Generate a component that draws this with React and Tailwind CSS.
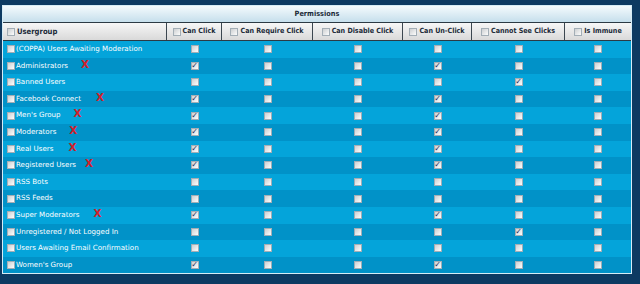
import React from "react";

const rows = [
  { name: "(COPPA) Users Awaiting Moderation", checks: [] },
  { name: "Administrators", x: 12, checks: [0, 3] },
  { name: "Banned Users", checks: [4] },
  { name: "Facebook Connect", x: 14, checks: [0, 3] },
  { name: "Men's Group", x: 12, checks: [0, 3] },
  { name: "Moderators", x: 12, checks: [0, 3] },
  { name: "Real Users", x: 14, checks: [0, 3] },
  { name: "Registered Users", x: 8, checks: [0, 3] },
  { name: "RSS Bots", checks: [] },
  { name: "RSS Feeds", checks: [] },
  { name: "Super Moderators", x: 13, checks: [0, 3] },
  { name: "Unregistered / Not Logged In", checks: [4] },
  { name: "Users Awaiting Email Confirmation", checks: [] },
  { name: "Women's Group", checks: [0, 3] },
];

const columns = [
  "Can Click",
  "Can Require Click",
  "Can Disable Click",
  "Can Un-Click",
  "Cannot See Clicks",
  "Is Immune",
];

const headFont = { fontFamily: '"DejaVu Sans Condensed", "DejaVu Sans", sans-serif' };

const Box = ({ checked }) => (
  <span className="inline-flex h-[8px] w-[8px] shrink-0 items-center justify-center border border-[#a3aeb6] bg-gradient-to-br from-[#cdd0d2] to-[#fdfdfd] text-[8px] font-bold leading-none text-[#1d2b5c]">
    {checked ? "✓" : ""}
  </span>
);

const App = () => {
  return (
    <div
      className="h-[284px] w-[640px] overflow-hidden bg-[#0d3a62] pl-[2px] pt-[5px]"
      style={{ fontFamily: '"DejaVu Sans", Verdana, sans-serif' }}
    >
      <div className="w-[630px] border border-[#d6ecf6] bg-[#0d3a62]">
        <div
          className="flex h-[17px] items-center justify-center border-b border-[#2c3a44] bg-gradient-to-b from-[#f4fafd] to-[#c6dfec] text-[7.3px] font-bold text-[#1b2a38]"
          style={headFont}
        >
          Permissions
        </div>
        <div className="grid h-[18px] grid-cols-[164px_55px_91px_90px_69px_93px_1fr] border-b border-[#2c3a44] bg-gradient-to-b from-[#f7f7f7] to-[#d9d9d9] text-[7.1px] font-bold text-[#1b2a38]">
          <div className="flex items-center gap-[2px] border-r border-[#3c4750] pl-[4px]">
            <Box />
            <span className="text-[7.6px]" style={headFont}>Usergroup</span>
          </div>
          {columns.map((c, i) => (
            <div
              key={c}
              className={`flex items-center justify-center gap-[2px] ${i < 5 ? "border-r border-[#3c4750]" : ""}`}
            >
              <Box />
              <span style={headFont}>{c}</span>
            </div>
          ))}
        </div>
        {rows.map((r, ri) => (
          <div
            key={r.name}
            className={`grid h-[16.6px] grid-cols-[164px_55px_91px_90px_69px_93px_1fr] text-[7.1px] text-white ${ri % 2 === 0 ? "bg-[#04a4da]" : "bg-[#0192c8]"}`}
          >
            <div className="flex items-center gap-[1px] pl-[4px]">
              <Box />
              <span className="whitespace-nowrap">{r.name}</span>
              {r.x ? (
                <span
                  className="relative -top-[2px] text-[10.5px] font-bold leading-none text-[#d21f2b]"
                  style={{ marginLeft: r.x }}
                >
                  X
                </span>
              ) : null}
            </div>
            {columns.map((c, i) => (
              <div key={c} className="flex items-center justify-center">
                <Box checked={r.checks.includes(i)} />
              </div>
            ))}
          </div>
        ))}
      </div>
    </div>
  );
};

export default App;
